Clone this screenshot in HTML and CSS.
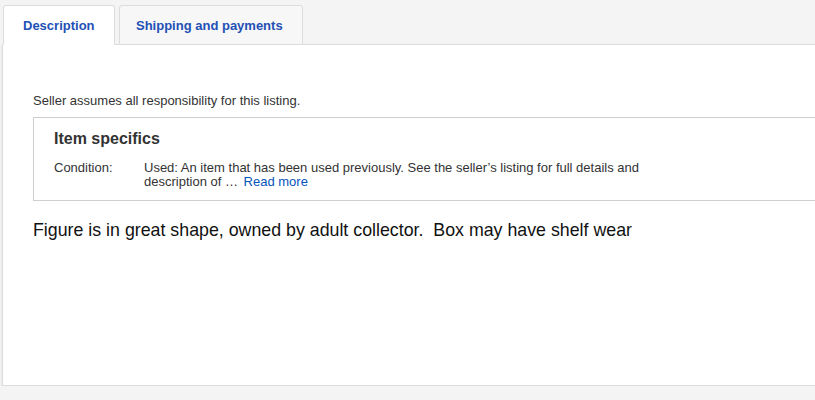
FILE: index.html
```html
<!DOCTYPE html>
<html>
<head>
<meta charset="utf-8">
<link rel="stylesheet" href="styles.css">
</head>
<body>
<div class="wrap">
  <div class="tabs">
    <div class="tab active">Description</div>
    <div class="tab">Shipping and payments</div>
  </div>
  <div class="panel">
    <p class="seller">Seller assumes all responsibility for this listing.</p>
    <div class="specs">
      <h2 class="specs-title">Item specifics</h2>
      <div class="spec-row">
        <div class="spec-label">Condition:</div>
        <div class="spec-value">Used: An item that has been used previously. See the seller’s listing for full details and description of <span class="ell">…</span> <a class="more" href="#">Read more</a></div>
      </div>
    </div>
    <p class="desc">Figure is in great shape, owned by adult collector.&nbsp; Box may have shelf wear</p>
  </div>
</div>
</body>
</html>
```

FILE: styles.css
```css
html, body {
  margin: 0;
  padding: 0;
  background: #f4f4f4;
  overflow: hidden;
  font-family: "Liberation Sans", Arial, sans-serif;
  color: #333;
}
.wrap {
  padding: 5px 0 0 2px;
  width: 840px;
}
.tabs {
  display: flex;
  gap: 4px;
  padding-left: 1px;
  position: relative;
  z-index: 1;
}
.tab {
  box-sizing: border-box;
  height: 40px;
  margin-bottom: -1px;
  border: 1px solid #dcdcdc;
  border-radius: 3px 3px 0 0;
  background: #f7f7f7;
  color: #2350b5;
  font-weight: bold;
  font-size: 13px;
  display: flex;
  align-items: center;
  padding-left: 16px;
  white-space: nowrap;
  border-bottom: 1px solid #dcdcdc;
}
.tab.active {
  background: #fff;
  border-bottom-color: #fff;
  width: 112px;
  padding-left: 19px;
}
.tab:not(.active) {
  width: 184px;
}
.panel {
  box-sizing: border-box;
  height: 342px;
  background: #fff;
  border: 1px solid #dcdcdc;
  box-shadow: 0 2px 3px rgba(0,0,0,0.08);
  padding: 49px 0 0 30px;
}
.seller {
  margin: 0 0 9px;
  font-size: 13px;
  line-height: 14px;
  color: #333;
}
.specs {
  border: 1px solid #cfcfcf;
  padding: 12px 20px 12px 20px;
  height: 58px;
}
.specs-title {
  margin: 0 0 13px;
  font-size: 16px;
  line-height: 18px;
  color: #333;
  font-weight: bold;
}
.spec-row {
  display: flex;
  font-size: 13px;
  line-height: 14px;
  color: #333;
}
.spec-label {
  width: 90px;
  flex: none;
}
.spec-value {
  width: 515px;
}
.ell {
  letter-spacing: 2px;
}
.more {
  color: #0654ba;
  text-decoration: none;
}
.desc {
  margin: 19px 0 0;
  font-size: 17.8px;
  line-height: 20px;
  color: #111;
}
```
